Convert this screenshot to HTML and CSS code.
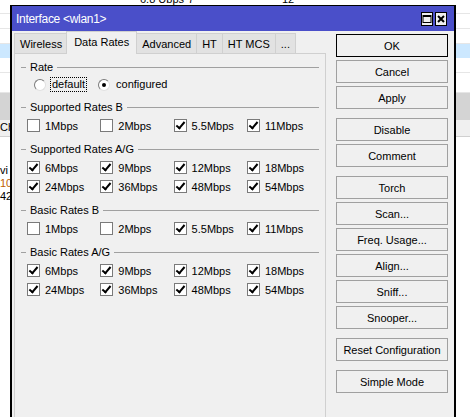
FILE: index.html
```html
<!DOCTYPE html>
<html>
<head>
<meta charset="utf-8">
<link rel="stylesheet" href="styles.css">
</head>
<body>
<div class="desk">
  <div class="bgtable">
    <div class="bgrow r-top"><span class="c1">6.8 Ubps</span><span class="c2">7</span><span class="c3">12</span></div>
    <div class="bgrow r-w8"></div>
    <div class="bgrow r-w"></div>
    <div class="bgrow r-w"></div>
    <div class="bgrow r-sel"></div>
    <div class="bgrow r-w"></div>
    <div class="bgrow r-w19"></div>
    <div class="bgrow r-gray"></div>
    <div class="bgrow r-head"><span class="lt">Cha</span></div>
    <div class="bgrow r-w13"></div>
    <div class="bgrow r-w13"></div>
    <div class="bgrow r-w13"><span class="lt">vi</span></div>
    <div class="bgrow r-w13"><span class="lt orange">100</span></div>
    <div class="bgrow r-w13"><span class="lt">42</span></div>
  </div>

  <div class="window">
    <div class="titlebar">
      <span class="title">Interface &lt;wlan1&gt;</span>
      <div class="tbtns">
        <span class="tbtn"><svg width="10" height="10" viewBox="0 0 10 10"><rect x="1" y="1.5" width="8" height="7" fill="none" stroke="#000" stroke-width="1"/><rect x="1" y="1" width="8" height="2" fill="#000"/></svg></span>
        <span class="tbtn"><svg width="10" height="10" viewBox="0 0 10 10"><path d="M2 2 L8 8 M8 2 L2 8" stroke="#000" stroke-width="2"/></svg></span>
      </div>
    </div>
    <div class="wbody">
      <div class="left">
        <div class="tabs">
          <span class="tab">Wireless</span>
          <span class="tab active">Data Rates</span>
          <span class="tab">Advanced</span>
          <span class="tab">HT</span>
          <span class="tab">HT MCS</span>
          <span class="tab">...</span>
        </div>
        <div class="panel">
          <div class="group">
            <div class="ghead"><span class="gl"></span><span class="gt">Rate</span><span class="gr"></span></div>
            <div class="radios">
              <label class="radio"><span class="rb"></span><span class="rt focus">default</span></label>
              <label class="radio"><span class="rb on"></span><span class="rt">configured</span></label>
            </div>
          </div>

          <div class="group">
            <div class="ghead"><span class="gl"></span><span class="gt">Supported Rates B</span><span class="gr"></span></div>
            <div class="grid">
              <label class="cb"><span class="box"></span>1Mbps</label>
              <label class="cb"><span class="box"></span>2Mbps</label>
              <label class="cb"><span class="box on"></span>5.5Mbps</label>
              <label class="cb"><span class="box on"></span>11Mbps</label>
            </div>
          </div>

          <div class="group">
            <div class="ghead"><span class="gl"></span><span class="gt">Supported Rates A/G</span><span class="gr"></span></div>
            <div class="grid">
              <label class="cb"><span class="box on"></span>6Mbps</label>
              <label class="cb"><span class="box on"></span>9Mbps</label>
              <label class="cb"><span class="box on"></span>12Mbps</label>
              <label class="cb"><span class="box on"></span>18Mbps</label>
              <label class="cb"><span class="box on"></span>24Mbps</label>
              <label class="cb"><span class="box on"></span>36Mbps</label>
              <label class="cb"><span class="box on"></span>48Mbps</label>
              <label class="cb"><span class="box on"></span>54Mbps</label>
            </div>
          </div>

          <div class="group">
            <div class="ghead"><span class="gl"></span><span class="gt">Basic Rates B</span><span class="gr"></span></div>
            <div class="grid">
              <label class="cb"><span class="box"></span>1Mbps</label>
              <label class="cb"><span class="box"></span>2Mbps</label>
              <label class="cb"><span class="box on"></span>5.5Mbps</label>
              <label class="cb"><span class="box on"></span>11Mbps</label>
            </div>
          </div>

          <div class="group">
            <div class="ghead"><span class="gl"></span><span class="gt">Basic Rates A/G</span><span class="gr"></span></div>
            <div class="grid">
              <label class="cb"><span class="box on"></span>6Mbps</label>
              <label class="cb"><span class="box on"></span>9Mbps</label>
              <label class="cb"><span class="box on"></span>12Mbps</label>
              <label class="cb"><span class="box on"></span>18Mbps</label>
              <label class="cb"><span class="box on"></span>24Mbps</label>
              <label class="cb"><span class="box on"></span>36Mbps</label>
              <label class="cb"><span class="box on"></span>48Mbps</label>
              <label class="cb"><span class="box on"></span>54Mbps</label>
            </div>
          </div>
        </div>
      </div>

      <div class="buttons">
        <span class="btn default">OK</span>
        <span class="btn">Cancel</span>
        <span class="btn">Apply</span>
        <span class="btn sep">Disable</span>
        <span class="btn">Comment</span>
        <span class="btn sep">Torch</span>
        <span class="btn">Scan...</span>
        <span class="btn">Freq. Usage...</span>
        <span class="btn">Align...</span>
        <span class="btn">Sniff...</span>
        <span class="btn">Snooper...</span>
        <span class="btn sep">Reset Configuration</span>
        <span class="btn sep">Simple Mode</span>
      </div>
    </div>
  </div>
</div>
</body>
</html>
```
FILE: styles.css
```css
* { box-sizing: border-box; }
html, body { margin: 0; padding: 0; }
body {
  width: 470px;
  height: 417px;
  overflow: hidden;
  background: #fff;
  font-family: "Liberation Sans", Arial, sans-serif;
  font-size: 11px;
  color: #000;
}
.desk { position: relative; width: 470px; height: 417px; overflow: hidden; }

/* background table behind the window */
.bgtable { position: absolute; left: 0; top: 0; width: 470px; }
.bgrow { position: relative; height: 15px; border-bottom: 1px solid #e6e6e6; background: #fff; }
.r-top { height: 6px; border-bottom: none; }
.r-top span { position: absolute; top: -7px; font-size: 11px; }
.r-top .c1 { left: 140px; }
.r-top .c2 { left: 188px; }
.r-top .c3 { left: 282px; }
.r-w8 { height: 8px; }
.r-w { height: 15px; }
.r-w19 { height: 20px; }
.r-sel { height: 14px; background: #cce8ff; border-bottom: none; }
.r-gray { height: 27px; background: #d4d4d4; border-bottom: none; }
.r-head { height: 17px; background: #f0f0f0; border-bottom: 1px solid #d0d0d0; }
.r-w13 { height: 13px; border-bottom: none; }
.lt { position: absolute; left: 0; top: 1px; }
.orange { color: #c06000; }

/* window */
.window {
  position: absolute;
  left: 10px;
  top: 5px;
  width: 446px;
  height: 430px;
  border: 2px solid #000;
  border-top-width: 1px;
  background: #f0f0f0;
}
.titlebar {
  height: 25px;
  background: #4a4fc9;
  color: #fff;
  display: flex;
  align-items: center;
  justify-content: space-between;
  padding: 0 7px 0 4px;
}
.title { font-size: 12px; letter-spacing: -0.3px; }
.tbtns { display: flex; gap: 2px; }
.tbtn {
  width: 12px; height: 14px;
  background: #f0f0f0;
  border: 1px solid #000;
  display: flex; align-items: center; justify-content: center;
}

.wbody { display: flex; padding: 0 6px 0 2px; gap: 10px; }
.left { width: 312px; }

.tabs { display: flex; align-items: flex-end; height: 22px; position: relative; z-index: 1; }
.tab {
  height: 20px;
  padding: 0 5px;
  display: flex; align-items: center;
  background: #e2e2e2;
  border: 1px solid #d0d0d0;
  border-bottom: none;
  margin-right: -1px;
}
.tab.active {
  height: 23px;
  margin: 0 -1px -1px -1px;
  padding: 0 7px 2px;
  background: #f0f0f0;
  position: relative;
  z-index: 2;
}

.panel {
  border: 1px solid #d0d0d0;
  height: 400px;
  padding-top: 4px;
}

.group { margin: 0 6px 5px 6px; }
.ghead { height: 18px; display: flex; align-items: center; }
.gl { width: 5px; height: 1px; background: #a0a0a0; }
.gt { padding: 0 4px 0 4px; }
.gr { flex: 1; height: 1px; background: #a0a0a0; }

.radios { height: 17px; display: flex; align-items: center; padding-left: 13px; }
.radio { display: flex; align-items: center; }
.radio + .radio { margin-left: 11px; }
.rb {
  width: 12px; height: 12px; border-radius: 50%;
  background: #fff;
  border: 1px solid #7a7a7a;
  border-right-color: #e0e0e0; border-bottom-color: #e0e0e0;
  position: relative;
}
.rb.on::after {
  content: ""; position: absolute; left: 3px; top: 3px;
  width: 4px; height: 4px; border-radius: 50%; background: #000;
}
.rt { margin-left: 4px; padding: 0 1px; border: 1px solid transparent; line-height: 13px; }
.rt.focus { border: 1px dotted #000; }

.grid { display: grid; grid-template-columns: repeat(4, 73.3px); padding-left: 6px; }
.cb { height: 19px; display: flex; align-items: center; }
.box {
  width: 13px; height: 13px;
  background: #fff;
  border: 1px solid #7a7a7a;
  margin-right: 5px;
  position: relative;
}
.box.on::after {
  content: "";
  position: absolute;
  left: 3px; top: 0px;
  width: 3px; height: 7px;
  border: solid #000;
  border-width: 0 2px 2px 0;
  transform: rotate(40deg);
}

.buttons { width: 112px; display: flex; flex-direction: column; gap: 3px; padding-top: 3px; }
.btn {
  height: 23px;
  display: flex; align-items: center; justify-content: center;
  background: #f0f0f0;
  border: 1px solid #a0a0a0;
}
.btn.default { border-color: #000; }
.btn.sep { margin-top: 6px; }
```
